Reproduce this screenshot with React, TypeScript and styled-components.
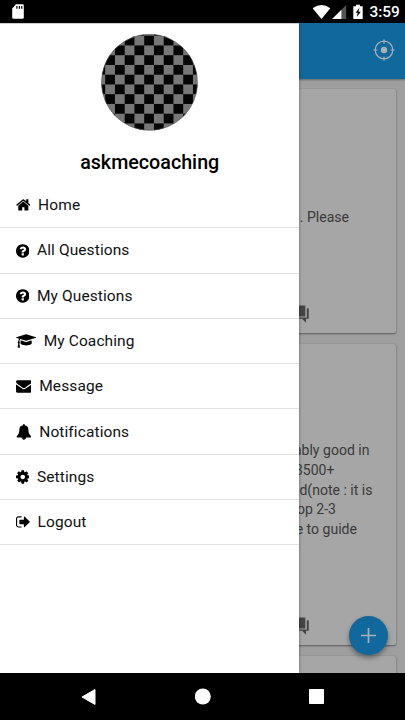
import React from "react";
import styled, { createGlobalStyle } from "styled-components";

const Global = createGlobalStyle`
  *{box-sizing:border-box}
  html,body{margin:0;padding:0;background:#000}
  body{font-family:Roboto,"Noto Sans",sans-serif}
  svg{display:block;flex:none}
`;
const Phone = styled.div`
  width:405px;height:720px;display:flex;flex-direction:column;overflow:hidden;background:#000;
`;
const StatusBar = styled.header`
  height:23px;flex:none;display:flex;align-items:center;padding:0 8px 0 12px;color:#fff;
`;
const Spacer = styled.div`flex:1;`;
const StatusIcons = styled.div`display:flex;align-items:center;`;
const Clock = styled.span`
  font-size:15.4px;font-weight:500;line-height:23px;margin-left:1px;padding-top:2px;width:27.5px;white-space:nowrap;
`;
const Stage = styled.main`
  position:relative;height:650px;flex:none;overflow:hidden;background:#9f9f9f;display:flex;flex-direction:column;
`;
const AppBar = styled.div`
  height:55.5px;flex:none;background:#10689c;display:flex;justify-content:flex-end;align-items:center;
  padding:0 10px 2px 0;box-shadow:0 1px 2px rgba(0,0,0,.35);
`;
const Feed = styled.div`
  display:flex;flex-direction:column;gap:10.5px;padding:10.2px 9px 0;
`;
const Card = styled.article<{ $h: number; $top: number }>`
  height:${p => p.$h}px;flex:none;background:#a6a6a6;border-radius:2px;
  box-shadow:0 1px 2px rgba(0,0,0,.42),0 0 1px rgba(0,0,0,.2);
  padding:${p => p.$top}px 0 9px;display:flex;flex-direction:column;
`;
const Line = styled.div<{ $end: number }>`
  font-size:14.06px;line-height:19.65px;color:#3a3a3a;text-align:right;white-space:nowrap;
  padding-right:${p => p.$end}px;
`;
const CardFooter = styled.div`
  margin-top:auto;display:flex;justify-content:flex-end;padding-right:86px;
`;
const Fab = styled.button`
  position:absolute;right:17.5px;bottom:18px;width:39px;height:39px;border:0;padding:0;border-radius:50%;
  background:#10689c;display:flex;align-items:center;justify-content:center;
  box-shadow:0 3px 5px rgba(0,0,0,.38);
`;
const Drawer = styled.aside`
  position:absolute;left:0;top:0;width:299.4px;height:650px;background:#fff;
  display:flex;flex-direction:column;box-shadow:0 0 3px rgba(0,0,0,.4);
  border-top:1px solid #ccc;
`;
const Profile = styled.div`
  height:159px;flex:none;display:flex;flex-direction:column;align-items:center;padding-top:10px;
`;
const Name = styled.div`
  margin-top:19.5px;font-size:19.7px;font-weight:500;line-height:24px;color:#000;
`;
const Menu = styled.nav`display:flex;flex-direction:column;`;
const MenuItem = styled.a`
  height:45.3px;border-bottom:1.5px solid #e2e2e2;display:flex;align-items:center;gap:7.8px;padding:0 0 0 15.7px;
  font-size:15.5px;color:#111;letter-spacing:.1px;line-height:20px;
`;
const NavBar = styled.footer`
  flex:1;display:flex;align-items:center;justify-content:space-between;padding:0 81px;
`;

const icons = {
  home: [1664, "M1472 992v480q0 26-19 45t-45 19h-384v-384h-256v384h-384q-26 0-45-19t-19-45v-480q0-1 .5-3t.5-3l575-474 575 474q1 2 1 6zm223-69l-62 74q-8 9-21 11h-3q-13 0-21-7l-692-577-692 577q-12 8-24 7-13-2-21-11l-62-74q-8-10-7-23.5t11-21.5l719-599q32-26 76-26t76 26l244 204v-195q0-14 9-23t23-9h192q14 0 23 9t9 23v408l219 182q10 8 11 21.5t-7 23.5z", 64],
  help: [1536, "M1024 1376v-192q0-14-9-23t-23-9h-192q-14 0-23 9t-9 23v192q0 14 9 23t23 9h192q14 0 23-9t9-23zm256-672q0-88-55.5-163t-138.5-116-170-41q-243 0-371 213-15 24 8 42l132 100q7 6 19 6 16 0 25-12 53-68 86-92 34-24 86-24 48 0 85.5 26t37.5 59q0 38-20 61t-68 45q-63 28-115.5 86.5t-52.5 125.5v36q0 14 9 23t23 9h192q14 0 23-9t9-23q0-19 21.5-49.5t54.5-49.5q32-18 49-28.5t46-35 44.5-48 28-60.5 12.5-81zm384 192q0 209-103 385.5t-279.5 279.5-385.5 103-385.5-103-279.5-279.5-103-385.5 103-385.5 279.5-279.5 385.5-103 385.5 103 279.5 279.5 103 385.5z", 128],
  cap: [2304, "M1774 836l18 316q4 69-82 128t-235 93.5-323 34.5-323-34.5-235-93.5-82-128l18-316 574 181q22 7 48 7t48-7zm530-324q0 23-22 31l-1120 352q-4 1-10 1t-10-1l-652-206q-43 34-71 111.5t-34 178.5q63 36 63 109 0 69-58 107l58 433q2 14-8 25-9 11-24 11h-192q-15 0-24-11-10-11-8-25l58-433q-58-38-58-107 0-73 65-111 11-207 98-330l-333-104q-22-8-22-31t22-31l1120-352q4-1 10-1t10 1l1120 352q22 8 22 31z", 0],
  mail: [1792, "M1792 710v794q0 66-47 113t-113 47h-1472q-66 0-113-47t-47-113v-794q44 49 101 87 362 246 497 345 57 42 92.5 65.5t94.5 48 110 24.5h2q51 0 110-24.5t94.5-48 92.5-65.5q170-123 498-345 57-39 100-87zm0-294q0 79-49 151t-122 123q-376 261-468 325-10 7-42.5 31t-54 38.5-52 32.5-57.5 27-50 9h-2q-23 0-50-9t-57.5-27-52-32.5-54-38.5-42.5-31q-91-64-262-182.5t-205-142.5q-62-42-117-115.5t-55-136.5q0-78 41.5-130t118.5-52h1472q65 0 112.5 47t47.5 113z", 0],
  bell: [1792, "M912 1696q0-16-16-16-59 0-101.5-42.5t-42.5-101.5q0-16-16-16t-16 16q0 73 51.5 124.5t124.5 51.5q16 0 16-16zm816-288q0 52-38 90t-90 38h-448q0 106-75 181t-181 75-181-75-75-181h-448q-52 0-90-38t-38-90q50-42 91-88t85-119.5 74.5-158.5 50-206 19.5-260q0-152 117-282.5t307-158.5q-8-19-8-39 0-40 28-68t68-28 68 28 28 68q0 20-8 39 190 28 307 158.5t117 282.5q0 139 19.5 260t50 206 74.5 158.5 85 119.5 91 88z", 0],
  cog: [1536, "M1152 896q0-106-75-181t-181-75-181 75-75 181 75 181 181 75 181-75 75-181zm512-109v222q0 12-8 23t-20 13l-185 28q-19 54-39 91 35 50 107 138 10 12 10 25t-9 23q-27 37-99 108t-94 71q-12 0-26-9l-138-108q-44 23-91 38-16 136-29 186-7 28-36 28h-222q-14 0-24.5-8.5t-11.5-21.5l-28-184q-49-16-90-37l-141 107q-10 9-25 9-14 0-25-11-126-114-165-168-7-10-7-23 0-12 8-23 15-21 51-66.5t54-70.5q-27-50-41-99l-183-27q-13-2-21-12.5t-8-23.5v-222q0-12 8-23t19-13l186-28q14-46 39-92-40-57-107-138-10-12-10-24 0-10 9-23 26-36 98.5-107.5t94.5-71.5q13 0 26 10l138 107q44-23 91-38 16-136 29-186 7-28 36-28h222q14 0 24.5 8.5t11.5 21.5l28 184q49 16 90 37l142-107q9-9 24-9 13 0 25 10 129 119 165 170 7 8 7 22 0 12-8 23-15 21-51 66.5t-54 70.5q26 50 41 98l183 28q13 2 21 12.5t8 23.5z", 128],
  exit: [1600, "M704 1440q0 4 1 20t.5 26.5-3 23.5-10 19.5-20.5 6.5h-320q-119 0-203.5-84.5t-84.5-203.5v-704q0-119 84.5-203.5t203.5-84.5h320q13 0 22.5 9.5t9.5 22.5q0 4 1 20t.5 26.5-3 23.5-10 19.5-20.5 6.5h-320q-66 0-113 47t-47 113v704q0 66 47 113t113 47h312l11.5 1 11.5 3 8 5.5 7 9 2 13.5zm928-544q0 26-19 45l-544 544q-19 19-45 19t-45-19-19-45v-288h-448q-26 0-45-19t-19-45v-384q0-26 19-45t45-19h448v-288q0-26 19-45t45-19 45 19l544 544q19 19 19 45z", 64],
} as const;

const MenuIcon = ({ name }: { name: keyof typeof icons }) => {
  const [w, d, x] = icons[name];
  return (
    <svg width={(w / 1792) * 15.75} height={15.75} viewBox={`${x} 0 ${w} 1792`} fill="#000">
      <path d={d} />
    </svg>
  );
};

const items: { icon: keyof typeof icons; label: string }[] = [
  { icon: "home", label: "Home" },
  { icon: "help", label: "All Questions" },
  { icon: "help", label: "My Questions" },
  { icon: "cap", label: "My Coaching" },
  { icon: "mail", label: "Message" },
  { icon: "bell", label: "Notifications" },
  { icon: "cog", label: "Settings" },
  { icon: "exit", label: "Logout" },
];

const CELL = 9.75;
const checks: { x: number; y: number }[] = [];
for (let r = -1; r < 10; r++)
  for (let c = -1; c < 10; c++)
    if ((r + c) % 2 === 0) checks.push({ x: 4.2 + c * CELL, y: 1.7 + r * CELL });

const Avatar = () => (
  <svg width="97" height="97" viewBox="0 0 97 97">
    <clipPath id="round"><circle cx="48.5" cy="48.3" r="48" /></clipPath>
    <g clipPath="url(#round)">
      <rect width="97" height="97" fill="#777" />
      {checks.map(({ x, y }) => (
        <rect key={`${x},${y}`} x={x} y={y} width={CELL} height={CELL} fill="#050505" />
      ))}
    </g>
    <circle cx="48.5" cy="48.3" r="48" fill="none" stroke="#555" strokeWidth=".6" />
  </svg>
);

const Forum = () => (
  <svg width="20" height="20" viewBox="0 0 20 20" fill="#444">
    <path d="M0 1.5h15.3v11h-15.3zM16.8 4.2h1.9v10.6h-2.7v4l-4-4h-7.5v-1.3h12.3z" />
  </svg>
);

export default function App() {
  return (
    <>
      <Global />
      <Phone>
        <StatusBar>
          <svg width="12" height="15" viewBox="0 0 12 15">
            <path d="M4 .3h6.5q1.3 0 1.3 1.3v11.8q0 1.3-1.3 1.3h-9q-1.3 0-1.3-1.3v-9z" fill="#fff" />
            <path d="M4.9 2v2.7M7.4 2v2.7M9.8 2v2.7" stroke="#000" strokeWidth="1.2" />
          </svg>
          <Spacer />
          <StatusIcons>
            <svg width="56" height="16" viewBox="0 0 56 16">
              <path d="M-.4 4.2Q8.5 -2.2 17.3 4.2L8.5 15z" fill="#fff" />
              <path d="M33.2 1v14h-14z" fill="#555" />
              <path d="M28.4 5.8v9.2h-9.2z" fill="#fff" />
              <path d="M43 .8h4v1.5h2.7v12.8h-9.4v-12.8h2.7z" fill="#fff" />
              <path d="M46.5 3.8l-4 5h2.2l-.9 4.2 4-5.3h-2.3l1-3.9z" fill="#000" />
            </svg>
          </StatusIcons>
          <Clock>3:59</Clock>
        </StatusBar>
        <Stage>
          <AppBar>
            <svg width="22" height="22" viewBox="0 0 22 22" fill="none" stroke="#a9b1b6" strokeWidth="1.2">
              <circle cx="11" cy="11" r="8.8" />
              <circle cx="11" cy="11" r="3.2" fill="#a9b1b6" stroke="none" />
              <path d="M11 .5v4M11 17.5v4M.5 11h4M17.5 11h4" />
            </svg>
          </AppBar>
          <Feed>
            <Card $h={244.5} $top={119}>
              <Line $end={47}>. Please</Line>
              <CardFooter><Forum /></CardFooter>
            </Card>
            <Card $h={301.5} $top={97.8}>
              <Line $end={26.5}>ably good in</Line>
              <Line $end={61.5}>3500+</Line>
              <Line $end={23.5}>ed(note : it is</Line>
              <Line $end={60}>op 2-3</Line>
              <Line $end={39}>e to guide</Line>
              <CardFooter><Forum /></CardFooter>
            </Card>
            <Card $h={60} $top={0} />
          </Feed>
          <Fab aria-label="Add">
            <svg width="17" height="17" viewBox="0 0 17 17" stroke="#a6b2b9" strokeWidth="1.7">
              <path d="M8.5 1v15M1 8.5h15" />
            </svg>
          </Fab>
          <Drawer>
            <Profile>
              <Avatar />
              <Name>askmecoaching</Name>
            </Profile>
            <Menu>
              {items.map(i => (
                <MenuItem key={i.label}>
                  <MenuIcon name={i.icon} />
                  {i.label}
                </MenuItem>
              ))}
            </Menu>
          </Drawer>
        </Stage>
        <NavBar>
          <svg width="16" height="18" viewBox="0 0 16 18"><path d="M14 1.5v15L1 9z" fill="#fff" stroke="#fff" strokeLinejoin="round" /></svg>
          <svg width="17" height="17" viewBox="0 0 17 17"><circle cx="7.8" cy="8.5" r="8" fill="#fff" /></svg>
          <svg width="15" height="15" viewBox="0 0 15 15"><rect width="15" height="15" rx=".8" fill="#fff" /></svg>
        </NavBar>
      </Phone>
    </>
  );
}
